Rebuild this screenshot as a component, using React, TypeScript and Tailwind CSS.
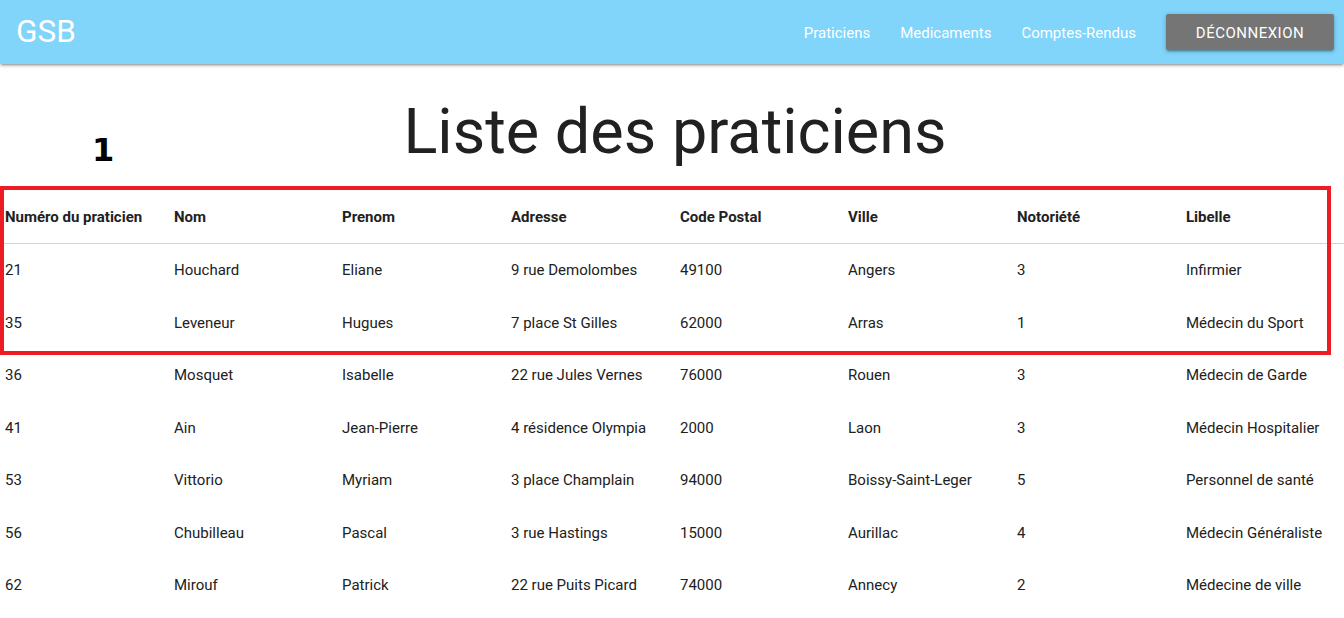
import React from 'react';

interface Praticien {
    numero: string;
    nom: string;
    prenom: string;
    adresse: string;
    cp: string;
    ville: string;
    notoriete: string;
    libelle: string;
}

const praticiens: Praticien[] = [
    { numero: '21', nom: 'Houchard', prenom: 'Eliane', adresse: '9 rue Demolombes', cp: '49100', ville: 'Angers', notoriete: '3', libelle: 'Infirmier' },
    { numero: '35', nom: 'Leveneur', prenom: 'Hugues', adresse: '7 place St Gilles', cp: '62000', ville: 'Arras', notoriete: '1', libelle: 'Médecin du Sport' },
    { numero: '36', nom: 'Mosquet', prenom: 'Isabelle', adresse: '22 rue Jules Vernes', cp: '76000', ville: 'Rouen', notoriete: '3', libelle: 'Médecin de Garde' },
    { numero: '41', nom: 'Ain', prenom: 'Jean-Pierre', adresse: '4 résidence Olympia', cp: '2000', ville: 'Laon', notoriete: '3', libelle: 'Médecin Hospitalier' },
    { numero: '53', nom: 'Vittorio', prenom: 'Myriam', adresse: '3 place Champlain', cp: '94000', ville: 'Boissy-Saint-Leger', notoriete: '5', libelle: 'Personnel de santé' },
    { numero: '56', nom: 'Chubilleau', prenom: 'Pascal', adresse: '3 rue Hastings', cp: '15000', ville: 'Aurillac', notoriete: '4', libelle: 'Médecin Généraliste' },
    { numero: '62', nom: 'Mirouf', prenom: 'Patrick', adresse: '22 rue Puits Picard', cp: '74000', ville: 'Annecy', notoriete: '2', libelle: 'Médecine de ville' },
];

const headers = ['Numéro du praticien', 'Nom', 'Prenom', 'Adresse', 'Code Postal', 'Ville', 'Notoriété', 'Libelle'];

const cellClass = 'px-[5px] py-[15px] text-left align-middle';

const Navbar: React.FC = () => (
    <nav className="relative z-10 h-16 bg-[#81d4fa] shadow-[0_2px_2px_0_rgba(0,0,0,0.14),0_3px_1px_-2px_rgba(0,0,0,0.12),0_1px_5px_0_rgba(0,0,0,0.2)]">
        <div className="flex h-full items-center justify-between pl-4 pr-[10px]">
            <a href="#" className="text-[31.5px] leading-none text-white">GSB</a>
            <ul className="mt-[2px] flex items-center text-[15px] text-white">
                <li><a href="#" className="px-[15px]">Praticiens</a></li>
                <li><a href="#" className="px-[15px]">Medicaments</a></li>
                <li><a href="#" className="px-[15px]">Comptes-Rendus</a></li>
                <li>
                    <button className="-mt-[2px] ml-[15px] h-9 w-[168px] rounded-[2px] bg-[#757575] pt-[2px] text-[15px] uppercase tracking-[0.5px] text-white shadow-[0_2px_2px_0_rgba(0,0,0,0.14),0_3px_1px_-2px_rgba(0,0,0,0.12),0_1px_5px_0_rgba(0,0,0,0.2)]">
                        Déconnexion
                    </button>
                </li>
            </ul>
        </div>
    </nav>
);

const App: React.FC = () => {
    return (
        <div className="relative h-[618px] overflow-hidden bg-white font-['Roboto',sans-serif] text-[15px] text-[#212121]">
            <Navbar />
            <h1 className="mt-[32.5px] mb-[25.2px] pl-[6px] text-center text-[63px] font-normal leading-[1.1]">
                Liste des praticiens
            </h1>

            <table className="w-full table-fixed border-collapse leading-[22.5px]">
                <colgroup>
                    <col className="w-[169px]" />
                    <col className="w-[168px]" />
                    <col className="w-[169px]" />
                    <col className="w-[169px]" />
                    <col className="w-[168px]" />
                    <col className="w-[169px]" />
                    <col className="w-[169px]" />
                    <col className="w-[163px]" />
                </colgroup>
                <thead>
                    <tr className="border-b border-[#d6d6d6]">
                        {headers.map(h => (
                            <th key={h} className={`${cellClass} font-bold`}>{h}</th>
                        ))}
                    </tr>
                </thead>
                <tbody>
                    {praticiens.map(p => (
                        <tr key={p.numero}>
                            <td className={cellClass}>{p.numero}</td>
                            <td className={cellClass}>{p.nom}</td>
                            <td className={cellClass}>{p.prenom}</td>
                            <td className={cellClass}>{p.adresse}</td>
                            <td className={cellClass}>{p.cp}</td>
                            <td className={cellClass}>{p.ville}</td>
                            <td className={cellClass}>{p.notoriete}</td>
                            <td className={cellClass}>{p.libelle}</td>
                        </tr>
                    ))}
                </tbody>
            </table>

            {/* annotation overlay */}
            <span className="absolute left-[92px] top-[134px] font-['DejaVu_Sans',sans-serif] text-[32px] font-bold leading-none text-black">1</span>
            <div className="pointer-events-none absolute left-0 top-[186px] h-[169px] w-[1331px] border-4 border-[#ed1c24]" />
        </div>
    );
};

export default App;
